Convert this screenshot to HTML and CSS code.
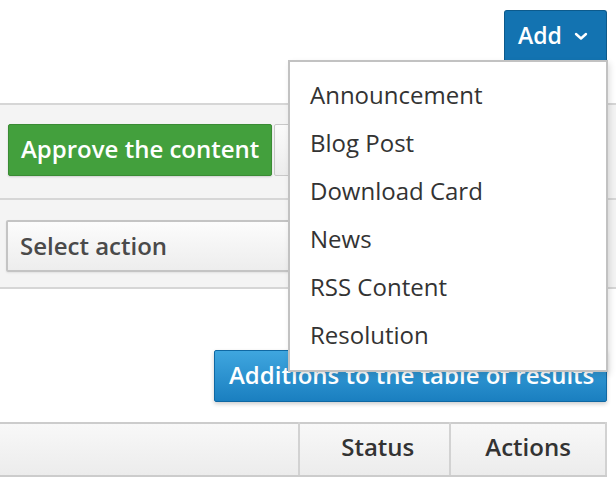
FILE: index.html
```html
<!DOCTYPE html>
<html>
<head>
<meta charset="utf-8">
<link rel="stylesheet" href="styles.css">
</head>
<body>
<div class="page">
  <div class="toolbar">
    <button class="btn-add">Add <svg class="chev" width="14" height="9" viewBox="0 0 14 9"><path d="M2 2 L7 6.5 L12 2" fill="none" stroke="#fff" stroke-width="2.4" stroke-linecap="round" stroke-linejoin="round"/></svg></button>
  </div>
  <div class="section section-approve">
    <button class="btn btn-green">Approve the content</button>
    <button class="btn btn-gray">Unpublish the content</button>
  </div>
  <div class="section section-select">
    <div class="select">Select action</div>
  </div>
  <div class="results-bar">
    <button class="btn btn-blue">Additions to the table of results</button>
  </div>
  <table class="table">
    <thead>
      <tr>
        <th class="col-title"></th>
        <th class="col-status">Status</th>
        <th class="col-actions">Actions</th>
      </tr>
    </thead>
  </table>
  <ul class="dropdown">
    <li>Announcement</li>
    <li>Blog Post</li>
    <li>Download Card</li>
    <li>News</li>
    <li>RSS Content</li>
    <li>Resolution</li>
  </ul>
</div>
</body>
</html>
```

FILE: styles.css
```css
* { box-sizing: border-box; }
html, body { margin: 0; padding: 0; background: #fff; }
body { font-family: "Open Sans", "DejaVu Sans", sans-serif; color: #333; }
.page { position: relative; width: 616px; height: 478px; overflow: hidden; }

.toolbar {
  display: flex;
  justify-content: flex-end;
  padding: 10px 9px 0 0;
  height: 103px;
}
.btn-add {
  width: 103px;
  height: 50px;
  background: #1373b1;
  border: 1px solid #0c5a8c;
  border-bottom: none;
  border-radius: 3px 3px 0 0;
  color: #fff;
  font-family: inherit;
  font-weight: 600;
  font-size: 23px;
  display: flex;
  align-items: center;
  padding: 0 0 2px 13px;
  gap: 12px;
}
.chev { margin-top: 3px; }

.section {
  background: #f4f4f4;
  border-top: 2px solid #d6d6d6;
}
.section-approve {
  display: flex;
  padding: 19px 0 21px 8px;
  height: 95px;
}
.section-select {
  padding: 20px 0 0 6px;
  height: 91px;
  border-bottom: 2px solid #d6d6d6;
}

.btn {
  font-family: inherit;
  font-weight: 600;
  font-size: 24px;
  height: 52px;
  border-radius: 2px;
  padding: 0 12px 3px 12px;
  white-space: nowrap;
}
.btn-green {
  background: #43a03d;
  border: 1px solid #3a8b34;
  color: #fff;
  box-shadow: 0 1px 2px rgba(0,0,0,0.15);
}
.btn-gray {
  margin-left: 2px;
  background: linear-gradient(#fafafa, #ececec);
  border: 1px solid #c8c8c8;
  color: #333;
  padding-left: 12px;
}
.select {
  width: 420px;
  height: 52px;
  border: 2px solid #c4c4c4;
  border-radius: 2px;
  background: linear-gradient(#fcfcfc, #ededed);
  font-weight: 600;
  font-size: 24px;
  color: #4a4a4a;
  display: flex;
  align-items: center;
  padding: 0 0 2px 12px;
  box-shadow: 0 1px 2px rgba(0,0,0,0.08);
}

.results-bar {
  display: flex;
  justify-content: flex-end;
  padding: 61px 9px 0 0;
  height: 133px;
}
.btn-blue {
  width: 393px;
  background: linear-gradient(#3fa6df, #1a7fc0);
  border: 1px solid #0f68a3;
  color: #fff;
  text-align: left;
  padding-left: 14px;
  box-shadow: 0 2px 4px rgba(0,0,0,0.2);
}

.table {
  border-collapse: collapse;
  width: 607px;
}
.table th {
  height: 53px;
  background: linear-gradient(#f8f8f8, #ececec);
  border-top: 2px solid #cccccc;
  border-bottom: 2px solid #cccccc;
  border-right: 2px solid #d2d2d2;
  font-weight: 600;
  font-size: 24px;
  color: #333;
  text-align: center;
  padding: 0 0 6px 0;
}
.col-title { width: 300px; }
.col-status { width: 151px; padding-left: 6px !important; }
.col-actions { width: 156px; }

.dropdown {
  position: absolute;
  left: 288px;
  top: 60px;
  width: 320px;
  height: 312px;
  margin: 0;
  padding: 10px 0 0 0;
  list-style: none;
  background: #fff;
  border: 2px solid #c2c2c2;
  box-shadow: 2px 3px 6px rgba(0,0,0,0.12);
}
.dropdown li {
  height: 48px;
  line-height: 46px;
  padding-left: 20px;
  font-size: 24px;
  color: #333;
}
```
